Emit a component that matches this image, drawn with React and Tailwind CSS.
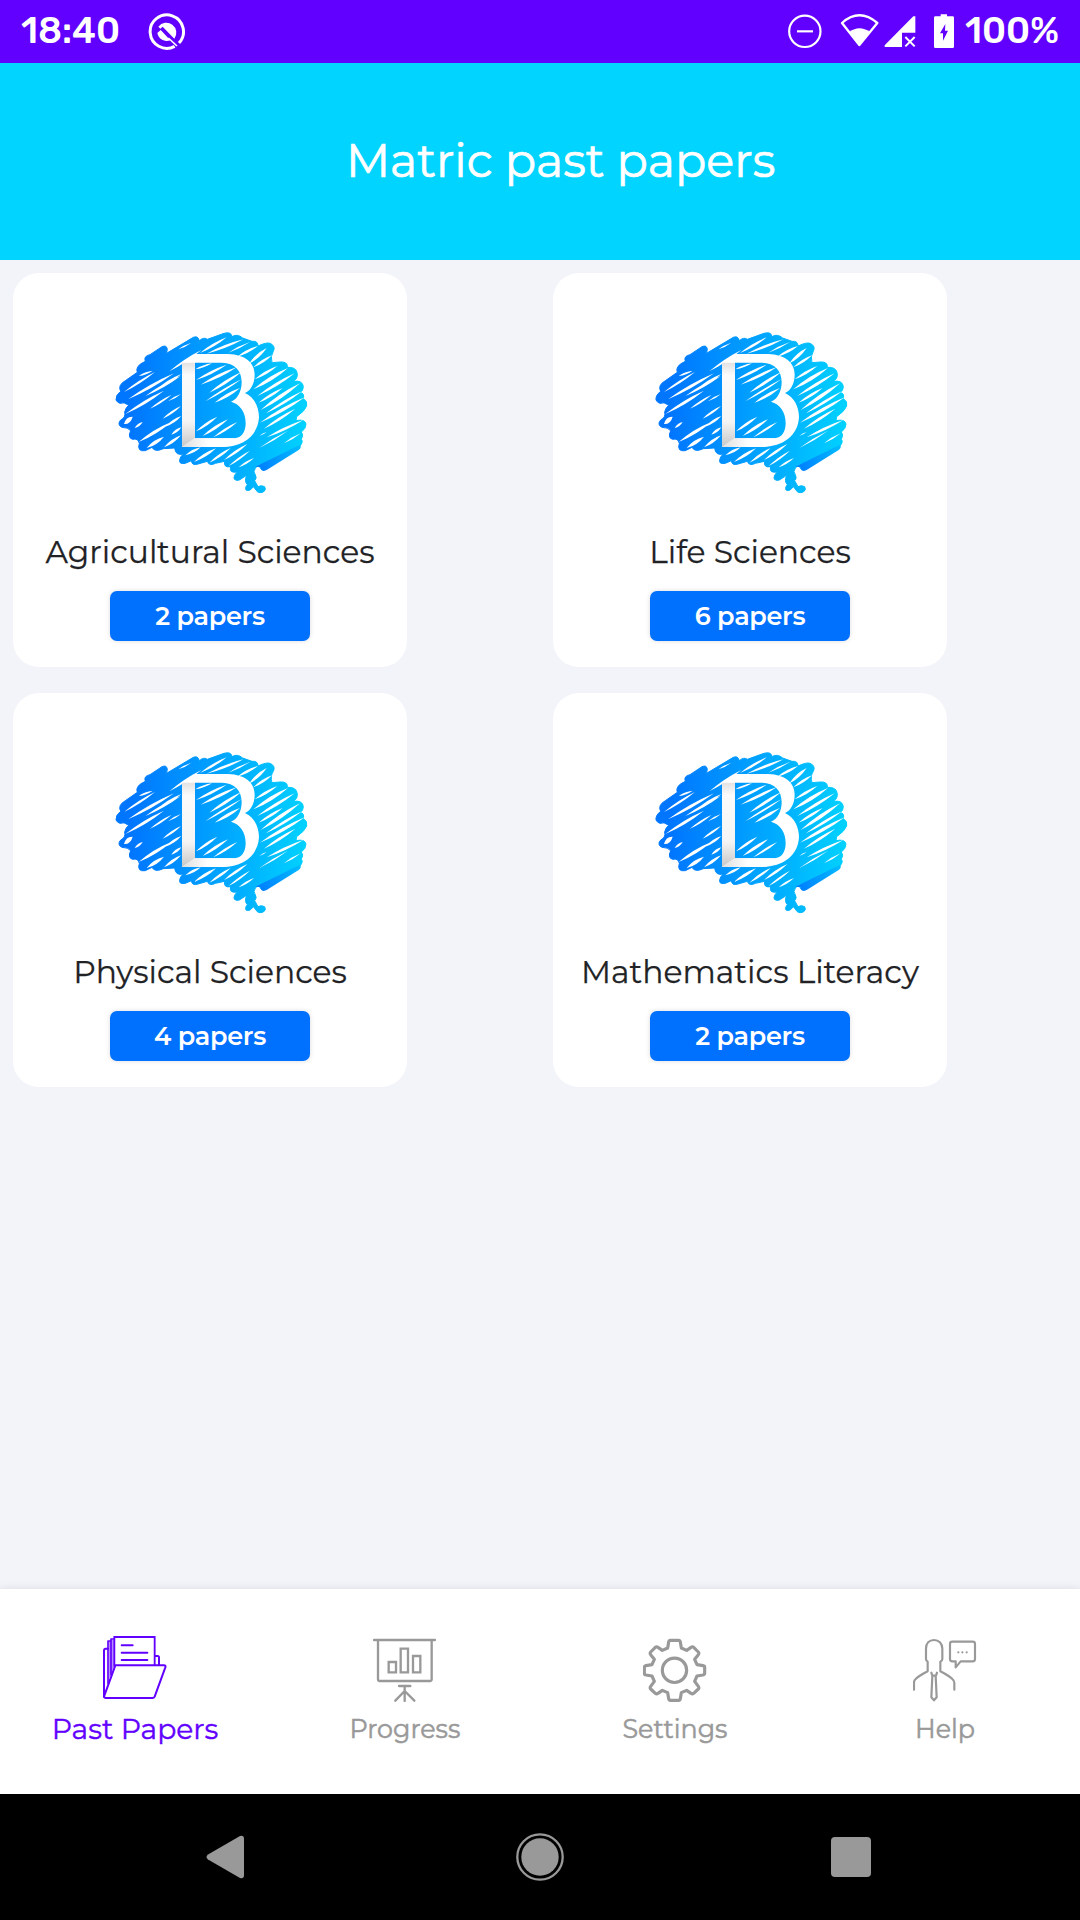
const OUTLINE =
  "M48 240 Q46 226 62 214 Q52 196 76 182 L112 157 Q104 138 136 124 Q130 108 150 104 L186 80 Q200 74 202 88 Q202 96 196 102 L280 52 Q294 46 298 62 Q312 50 322 58 L372 40 Q394 34 396 50 Q412 40 428 54 L456 64 Q474 62 474 78 Q500 66 510 70 Q528 78 520 94 Q510 108 516 128 L540 126 Q564 124 562 142 Q590 140 592 162 Q594 176 580 184 Q608 180 610 200 Q610 212 600 218 Q614 218 610 236 Q624 244 620 258 Q614 274 590 290 L588 302 Q614 296 618 312 Q618 326 604 336 Q612 344 604 358 Q612 366 596 382 L486 448 Q476 446 482 430 L466 444 Q458 456 466 464 Q472 474 464 482 L474 500 Q484 494 494 500 Q500 510 490 516 Q474 522 468 510 L460 500 Q448 516 438 510 Q434 502 442 494 Q432 484 440 466 L418 480 Q402 484 402 472 Q404 462 412 456 Q386 460 392 440 Q370 444 374 424 L346 430 Q328 440 322 424 L294 432 Q276 438 274 422 L256 430 Q234 434 240 416 Q242 408 250 402 Q226 408 224 384 L190 386 Q164 398 156 382 L136 392 Q110 396 118 370 Q114 354 98 358 Q82 354 92 332 Q84 322 66 322 Q50 314 62 300 Q78 292 74 276 Q76 264 86 256 Q72 244 60 250 Q52 248 48 240 Z";

// Gaps between pen strokes: start, end and half width of each.
const SLITS = [
  [72, 216, 165, 156, 7], [84, 238, 222, 160, 9], [76, 282, 192, 212, 9], [72, 312, 98, 290, 14],
  [116, 168, 158, 152, 6], [136, 228, 242, 168, 8], [170, 208, 244, 162, 8], [150, 266, 215, 224, 6],
  [104, 324, 128, 306, 7], [204, 244, 243, 222, 5], [188, 296, 243, 258, 7], [196, 320, 244, 288, 8],
  [116, 366, 214, 306, 10], [140, 384, 192, 350, 11], [192, 382, 243, 346, 9], [214, 344, 244, 322, 8],
  [235, 88, 274, 68, 4], [208, 154, 304, 90, 7], [300, 99, 380, 52, 8], [320, 101, 430, 58, 8],
  [385, 98, 450, 66, 5], [412, 110, 474, 78, 8], [448, 130, 500, 84, 10], [460, 142, 516, 106, 8],
  [286, 148, 336, 130, 6], [288, 180, 380, 134, 8], [302, 194, 410, 142, 9], [328, 218, 424, 156, 9],
  [316, 244, 424, 178, 6], [344, 248, 420, 204, 9], [288, 334, 352, 290, 8], [308, 348, 384, 298, 9],
  [340, 352, 412, 306, 7], [256, 406, 302, 382, 8], [282, 426, 348, 385, 9], [328, 428, 392, 384, 8],
  [372, 420, 442, 372, 8], [386, 438, 450, 392, 6], [416, 442, 462, 414, 6], [464, 178, 532, 138, 8],
  [460, 208, 564, 144, 11], [472, 228, 584, 160, 9], [476, 248, 548, 204, 8], [482, 270, 600, 190, 11],
  [498, 280, 606, 214, 8], [480, 308, 614, 232, 10], [492, 326, 586, 266, 8], [500, 352, 610, 300, 8],
  [478, 384, 564, 332, 5], [552, 370, 602, 340, 5], [478, 348, 500, 336, 3],
];

function lens([x1, y1, x2, y2, w]) {
  const mx = (x1 + x2) / 2;
  const my = (y1 + y2) / 2;
  return `M${x1} ${y1}Q${mx - w * 0.5} ${my - w * 0.87} ${x2} ${y2}Q${mx + w * 0.5} ${my + w * 0.87} ${x1} ${y1}Z`;
}

function BrainLogo() {
  return (
    <svg viewBox="0 0 660 555" className="h-[185px] w-[220px] shrink-0" aria-hidden="true">
      <defs>
        <linearGradient id="brain" gradientUnits="userSpaceOnUse" x1="50" y1="0" x2="620" y2="0">
          <stop offset="0.08" stopColor="#0076ff" />
          <stop offset="0.5" stopColor="#00a0ff" />
          <stop offset="1" stopColor="#00d2ff" />
        </linearGradient>
        <linearGradient id="patch" gradientUnits="userSpaceOnUse" x1="480" y1="440" x2="600" y2="375">
          <stop offset="0" stopColor="#0080ff" />
          <stop offset="1" stopColor="#00bcff" />
        </linearGradient>
        <linearGradient id="stem" x1="0" y1="0" x2="0" y2="1">
          <stop offset="0" stopColor="#e2e2e2" />
          <stop offset="0.15" stopColor="#fbfbfb" />
          <stop offset="0.7" stopColor="#f4f4f4" />
          <stop offset="1" stopColor="#c8c8c8" />
        </linearGradient>
        <linearGradient id="foot" x1="0" y1="0" x2="1" y2="0">
          <stop offset="0" stopColor="#dedede" />
          <stop offset="0.5" stopColor="#ffffff" />
        </linearGradient>
      </defs>
      <path d={OUTLINE} fill="url(#brain)" stroke="url(#brain)" strokeWidth="3" strokeLinejoin="round" />
      <path d={SLITS.map(lens).join("")} fill="#fff" />
      <path d="M466 440L600 374Q606 382 596 390L500 450Q482 458 482 442Z" fill="url(#patch)" />
      <path
        fill="#fff"
        fillRule="evenodd"
        d="M246 128L284 102H384C438 104 464 130 464 164C464 194 450 212 435 219C464 232 477 262 477 292C474 346 430 380 368 381H246ZM285 128V355H404C424 354 437 336 437 310C437 276 420 252 393 245C412 238 425 214 425 186C425 152 404 129 366 128Z"
      />
      <path d="M246 128H285V355L246 381Z" fill="url(#stem)" />
      <path d="M246 381L285 355H404C400 372 386 381 368 381Z" fill="url(#foot)" />
    </svg>
  );
}

function SubjectCard({ name, papers }) {
  return (
    <article className="m-[13px] flex h-[394px] w-[394px] flex-col items-center rounded-[26px] bg-white pt-[47px]">
      <BrainLogo />
      <h2 className="mt-[27px] text-[31.4px] leading-10 whitespace-nowrap text-[#212225] [-webkit-text-stroke:0.25px]">{name}</h2>
      <span className="mt-[19px] h-[50px] w-[200px] rounded-[7px] bg-[#0070ff] text-center text-[25.5px] leading-[49px] font-semibold tracking-[-0.3px] text-white shadow-[0_0_5px_rgba(0,0,0,0.14)]">
        {papers} papers
      </span>
    </article>
  );
}

const ICON = "h-16 w-16 shrink-0";

function FolderIcon() {
  return (
    <svg viewBox="69 48 192 192" className={ICON} fill="none" stroke="currentColor" strokeWidth="6" strokeLinejoin="round" strokeLinecap="round">
      <path d="M92 60H103V136L86 180V64H92Z" fill="currentColor" fillOpacity="0.45" stroke="none" />
      <path d="M84 86H77Q72 86 72 92V230" />
      <path d="M84 190V63H92M93 164V57H103" strokeWidth="5" />
      <path d="M103 138V51H224V134" strokeLinejoin="miter" strokeWidth="5.5" />
      <path d="M225 108H233Q237 108 237 113V134" />
      <path d="M125 76H158M125 98H202M125 120H202" />
      <path d="M106 136H252Q258 136 256 142L224 230Q222 234 217 234H78Q71 234 73 227Z" />
    </svg>
  );
}

function BoardIcon() {
  return (
    <svg viewBox="69 54 192 192" className={ICON} fill="none" stroke="currentColor" strokeWidth="7" strokeLinejoin="round" strokeLinecap="round">
      <path d="M72 60H255M84 63V178Q84 183 89 183H240Q245 183 245 178V63" />
      <path d="M116 126H138V157H116ZM152 86H174V157H152ZM189 108H211V157H189Z" strokeLinejoin="miter" />
      <path d="M147 198H181M164 200V243M164 213L136 242M164 213L193 242" />
    </svg>
  );
}

function GearIcon() {
  return (
    <svg viewBox="69 54 192 192" className={ICON} fill="none" stroke="currentColor" strokeWidth="9.5" strokeLinejoin="round">
      <circle cx="163.5" cy="151" r="36.5" />
      <path d="M151 61H176Q180 61 181 66L184 84L200 91L213 82Q217 79 221 82L235 96Q238 100 235 104L224 118L231 134L249 137Q254 138 254 142V160Q254 164 249 165L231 168L224 184L235 199Q238 203 235 207L221 220Q217 223 213 220L200 211L184 218L181 236Q180 241 176 241H151Q147 241 146 236L143 218L127 211L114 220Q110 223 106 220L92 207Q89 203 92 199L103 184L96 168L78 165Q73 164 73 160V142Q73 138 78 137L96 134L103 118L92 104Q89 100 92 96L106 82Q110 79 114 82L127 91L143 84L146 66Q147 61 151 61Z" />
    </svg>
  );
}

function HelpIcon() {
  return (
    <svg viewBox="69 54 192 192" className={ICON} fill="none" stroke="currentColor" strokeWidth="6.5" strokeLinejoin="round" strokeLinecap="round">
      <path d="M72 209V188Q72 181 77 177Q86 168 113 154V125Q108 122 108 117V86C108 70 118 60 132 60S157 70 157 86V117Q157 122 151 125V154Q178 168 187 177Q193 182 193 188V209" />
      <path d="M124 158L127 167H138L141 158M127 168L124 232L132 241L140 232L137 168" />
      <path d="M187 65H248Q255 65 255 72V117Q255 124 248 124H212L197 142V124H187Q180 124 180 117V72Q180 65 187 65Z" />
      <path d="M205 97H205.1M217 97H217.1M230 97H230.1" />
    </svg>
  );
}

function StatusBar() {
  return (
    <div className="flex h-[63px] items-center bg-[#6200ff] font-[Rubik,Inter,sans-serif] text-[36.7px] leading-[61px] font-medium text-white">
      <span className="ml-[21px] h-[63px] w-[100px] whitespace-nowrap">18:40</span>
      <svg viewBox="444 34 114 120" className="ml-[26px] h-10 w-[38px]" fill="none" stroke="#fff" strokeWidth="9">
        <path d="M527 137A50 50 0 1 1 540 127" />
        <path d="M478 78A29 29 0 0 1 526 114L491 78L484 84Z" fill="#fff" stroke="none" />
        <path d="M475 97L485 88L514 119A29 29 0 0 1 475 97Z" fill="#fff" stroke="none" />
        <path d="M508 112L534 136" strokeWidth="5" />
      </svg>
      <div className="ml-auto flex h-full">
        <svg viewBox="80 0 108 192" className="h-16 w-9" fill="none" stroke="#fff" strokeWidth="6.5">
          <circle cx="133.5" cy="94" r="47" />
          <path d="M110 94H158" />
        </svg>
        <svg viewBox="240 0 120 192" className="ml-[17px] h-16 w-10" fill="none" stroke="#fff" strokeWidth="7">
          <path d="M246 69Q298 23 352 69L298 135Z" strokeLinejoin="round" />
          <path d="M268 96Q298 74 330 96L298 136Z" fill="#fff" stroke="none" />
        </svg>
        <svg viewBox="372 0 96 192" className="ml-1 h-16 w-8">
          <path d="M374 141V136L460 49H466V98H426V141Z" fill="#fff" />
          <path d="M436 111L464 139M464 111L436 139" stroke="#fff" strokeWidth="6" />
        </svg>
        <svg viewBox="519 0 66 192" className="ml-[17px] h-16 w-[22px]">
          <path d="M542 43H561V49H578Q582 49 582 53V140Q582 144 578 144H526Q522 144 522 140V53Q522 49 526 49H542ZM556 72L540 100H549V122L564 92H555Z" fill="#fff" fillRule="evenodd" />
        </svg>
        <span className="mr-[21px] ml-[10px] whitespace-nowrap">100%</span>
      </div>
    </div>
  );
}

const SUBJECTS = [
  { name: "Agricultural Sciences", papers: 2 },
  { name: "Life Sciences", papers: 6 },
  { name: "Physical Sciences", papers: 4 },
  { name: "Mathematics Literacy", papers: 2 },
];

const TABS = [
  { label: "Past Papers", Icon: FolderIcon, active: true },
  { label: "Progress", Icon: BoardIcon },
  { label: "Settings", Icon: GearIcon },
  { label: "Help", Icon: HelpIcon },
];

export default function App() {
  return (
    <div className="flex h-[1920px] w-[1080px] flex-col overflow-hidden bg-[#f3f4f9] font-[Montserrat,Inter,sans-serif]">
      <StatusBar />
      <header className="flex h-[197px] items-center bg-[#00d4ff] pl-[346px]">
        <h1 className="text-[46.2px] leading-none whitespace-nowrap text-white [-webkit-text-stroke:0.7px]">Matric past papers</h1>
      </header>
      <main className="grid flex-1 grid-cols-2 content-start">
        {SUBJECTS.map((s) => (
          <SubjectCard key={s.name} {...s} />
        ))}
      </main>
      <nav className="grid h-[205px] grid-cols-4 bg-white shadow-[0_-1px_8px_rgba(0,0,0,0.08)]">
        {TABS.map(({ label, Icon, active }) => (
          <a
            key={label}
            className={
              active
                ? "flex flex-col items-center gap-[11px] pt-[47px] text-[28.2px] leading-9 text-[#6200ff] [-webkit-text-stroke:0.4px]"
                : "flex flex-col items-center gap-[9px] pt-[49px] text-[25.4px] leading-9 text-[#999999] [-webkit-text-stroke:0.5px]"
            }
          >
            <Icon />
            <span>{label}</span>
          </a>
        ))}
      </nav>
      <div className="flex h-[126px] items-center bg-black">
        <svg viewBox="0 0 38 44" className="ml-[206px] h-11 w-[38px]" fill="#999">
          <path d="M2 19.5L34 1Q38 0 38 4V40Q38 44 34 43L2 24.5Q-1 22 2 19.5Z" />
        </svg>
        <svg viewBox="0 0 48 48" className="ml-[272px] h-12 w-12" fill="#999">
          <circle cx="24" cy="24" r="18.7" />
          <circle cx="24" cy="24" r="22.7" fill="none" stroke="#999" strokeWidth="2.3" />
        </svg>
        <span className="ml-[267px] h-10 w-10 rounded-[4px] bg-[#999999]" />
      </div>
    </div>
  );
}
